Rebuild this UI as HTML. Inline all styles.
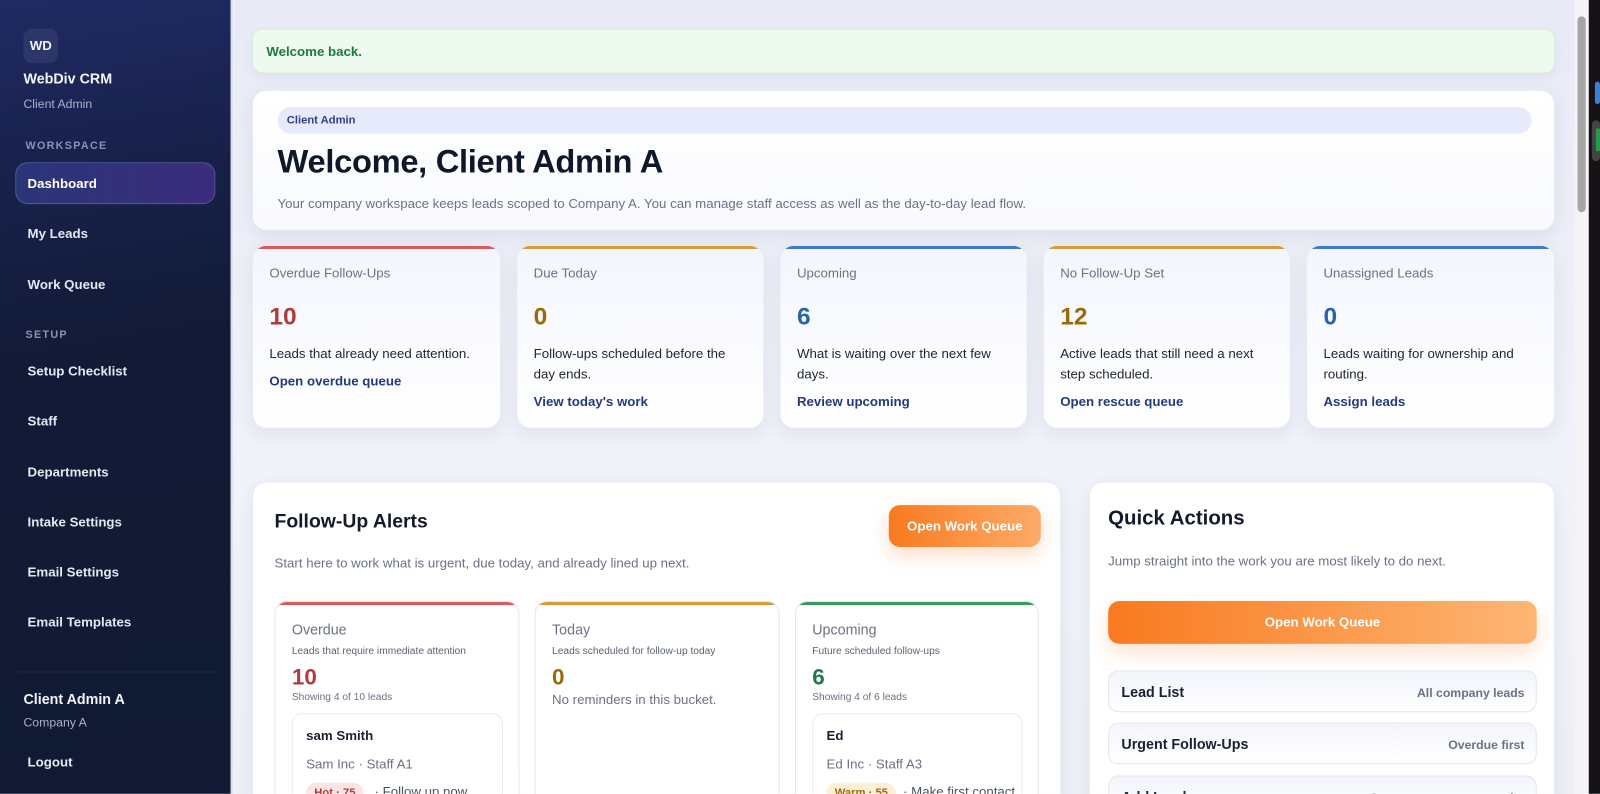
<!DOCTYPE html>
<html><head><meta charset="utf-8"><style>
*{box-sizing:border-box;margin:0;padding:0}
body{width:1600px;height:794px;overflow:hidden;font-family:"Liberation Sans",sans-serif;background:#eef0f8;position:relative}
#wrap{position:absolute;left:0;top:0;width:1568px;height:778px;transform:scale(1.020409);transform-origin:0 0;overflow:hidden}
.a{position:absolute}
#sb{left:0;top:0;width:228px;height:778px;background:linear-gradient(170deg,#1f2a63 0%,#18214a 22%,#121a36 45%,#111a32 100%);border-right:2px solid #d9dcea}
.nav{position:absolute;left:27px;font-size:13px;font-weight:bold;color:#e4e8f5}
.sec{position:absolute;left:25px;font-size:10.5px;font-weight:bold;letter-spacing:1.3px;color:#8b93b3}
#main{left:230px;top:0;width:1313px;height:778px;background:linear-gradient(180deg,#e8eaf6,#f1f3f9 60%,#eef0f6)}
.card{position:absolute;background:linear-gradient(180deg,#f4f6fd,#fff);border-radius:14px;box-shadow:0 6px 18px rgba(40,50,100,.08);border:1px solid #e8ebf4;overflow:hidden}
.stat .bar{position:absolute;left:0;top:0;right:0;height:3px}
.stat .t{position:absolute;left:16px;top:19px;font-size:13px;color:#6b7285}
.stat .n{position:absolute;left:16px;top:56px;font-size:24px;font-weight:bold}
.stat .d{position:absolute;left:16px;top:96px;width:222px;font-size:13px;line-height:20px;color:#1f2433}
.stat .l{font-size:13px;font-weight:bold;color:#243a80;display:block;margin-top:7px}
.sub{position:absolute;top:589px;height:220px;background:#fff;border:1px solid #e3e6ef;border-radius:12px;overflow:hidden}
.sub .bar{position:absolute;left:0;top:0;right:0;height:3px}
.sub .t{position:absolute;left:16px;top:19px;font-size:14px;color:#6b7285}
.sub .s{position:absolute;left:16px;top:43px;font-size:10px;color:#5b6275}
.sub .n{position:absolute;left:16px;top:61px;font-size:22px;font-weight:bold}
.sub .m{position:absolute;left:16px;top:88px;font-size:10px;color:#6b7285}
.lead{position:absolute;left:16px;top:109px;width:207px;height:120px;border:1px solid #e8ebf2;border-radius:10px;background:#fff}
.lead .nm{position:absolute;left:13px;top:13px;font-size:13px;font-weight:bold;color:#1a2033}
.lead .co{position:absolute;left:13px;top:41px;font-size:13px;color:#6b7285}
.lead .tg{position:absolute;left:13px;top:67px;font-size:11px;font-weight:bold;padding:4px 8px;border-radius:10px}
.lead .nx{position:absolute;top:68px;font-size:13px;color:#4b5263}
.qa{position:absolute;left:18px;width:420px;height:41px;border:1px solid #e3e6f0;border-radius:10px;background:linear-gradient(180deg,#f3f5fc,#fff)}
.qa b{position:absolute;left:12px;top:12px;font-size:14px;color:#1a2033}
.qa span{position:absolute;right:11px;top:14px;font-size:12px;font-weight:bold;color:#6b7285}
</style></head><body>
<div id="wrap">
<div id="sb" class="a">
 <div class="a" style="left:23px;top:28px;width:34px;height:34px;border-radius:9px;background:#2c3668;color:#f0f2fa;font-size:13px;font-weight:bold;text-align:center;line-height:34px">WD</div>
 <div class="a" style="left:23px;top:69px;font-size:14px;font-weight:bold;color:#f3f5fb">WebDiv CRM</div>
 <div class="a" style="left:23px;top:95px;font-size:12px;color:#a9b0cc">Client Admin</div>
 <div class="sec" style="top:137px">WORKSPACE</div>
 <div class="a" style="left:15px;top:159px;width:196px;height:41px;border-radius:12px;background:linear-gradient(90deg,#2b3577,#3a2c7c);border:1px solid #4c5699"></div>
 <div class="nav" style="top:172px;color:#fff">Dashboard</div>
 <div class="nav" style="top:221px">My Leads</div>
 <div class="nav" style="top:271px">Work Queue</div>
 <div class="sec" style="top:322px">SETUP</div>
 <div class="nav" style="top:356px">Setup Checklist</div>
 <div class="nav" style="top:405px">Staff</div>
 <div class="nav" style="top:455px">Departments</div>
 <div class="nav" style="top:504px">Intake Settings</div>
 <div class="nav" style="top:553px">Email Settings</div>
 <div class="nav" style="top:602px">Email Templates</div>
 <div class="a" style="left:16px;top:658px;width:196px;height:1px;background:#1e2844"></div>
 <div class="a" style="left:23px;top:677px;font-size:14px;font-weight:bold;color:#f3f5fb">Client Admin A</div>
 <div class="a" style="left:23px;top:701px;font-size:12px;color:#a9b0cc">Company A</div>
 <div class="nav" style="top:739px">Logout</div>
</div>
<div id="main" class="a"></div>
<div class="a" style="left:247px;top:28px;width:1277px;height:44px;border-radius:10px;background:#eef9f0;border:1px solid #d5edda;box-shadow:0 4px 12px rgba(40,50,100,.05)">
 <div class="a" style="left:13px;top:14px;font-size:13px;font-weight:bold;color:#1f7a3a">Welcome back.</div>
</div>
<div class="card" style="left:247px;top:88px;width:1277px;height:138px;background:linear-gradient(180deg,#fff,#f9fafd)">
 <div class="a" style="left:24px;top:16px;width:1229px;height:26px;border-radius:13px;background:#e6eafb"></div>
 <div class="a" style="left:33px;top:23px;font-size:11px;font-weight:bold;color:#2f3f8c">Client Admin</div>
 <div class="a" style="left:24px;top:51px;font-size:32px;font-weight:bold;color:#0f172a;letter-spacing:-.3px">Welcome, Client Admin A</div>
 <div class="a" style="left:24px;top:103px;font-size:13px;color:#6b7285">Your company workspace keeps leads scoped to Company A. You can manage staff access as well as the day-to-day lead flow.</div>
</div>
<div class="card stat" style="left:247px;top:240px;width:244px;height:180px"><div class="bar" style="background:#d9595a"></div><div class="t">Overdue Follow-Ups</div><div class="n" style="color:#b23b3b">10</div><div class="d">Leads that already need attention.<span class="l">Open overdue queue</span></div></div>
<div class="card stat" style="left:506px;top:240px;width:243px;height:180px"><div class="bar" style="background:#d99a34"></div><div class="t">Due Today</div><div class="n" style="color:#9a6a08">0</div><div class="d" style="width:210px">Follow-ups scheduled before the day ends.<span class="l">View today's work</span></div></div>
<div class="card stat" style="left:764px;top:240px;width:243px;height:180px"><div class="bar" style="background:#3c7bc7"></div><div class="t">Upcoming</div><div class="n" style="color:#2864a8">6</div><div class="d" style="width:210px">What is waiting over the next few days.<span class="l">Review upcoming</span></div></div>
<div class="card stat" style="left:1022px;top:240px;width:243px;height:180px"><div class="bar" style="background:#d99a34"></div><div class="t">No Follow-Up Set</div><div class="n" style="color:#9a6a08">12</div><div class="d" style="width:210px">Active leads that still need a next step scheduled.<span class="l">Open rescue queue</span></div></div>
<div class="card stat" style="left:1280px;top:240px;width:244px;height:180px"><div class="bar" style="background:#3c7bc7"></div><div class="t">Unassigned Leads</div><div class="n" style="color:#2864a8">0</div><div class="d" style="width:210px">Leads waiting for ownership and routing.<span class="l">Assign leads</span></div></div>

<div class="card" style="left:247px;top:472px;width:793px;height:340px;background:#fff">
 <div class="a" style="left:21px;top:28px;font-size:19px;font-weight:bold;color:#141a2b">Follow-Up Alerts</div>
 <div class="a" style="left:21px;top:71px;font-size:13px;color:#6b7285">Start here to work what is urgent, due today, and already lined up next.</div>
 <div class="a" style="left:623px;top:22px;width:149px;height:41px;border-radius:11px;background:linear-gradient(90deg,#f97a1f,#fdab68);box-shadow:0 8px 18px rgba(249,122,31,.25);color:#fff;font-size:13px;font-weight:bold;text-align:center;line-height:41px">Open Work Queue</div>
</div>
<div class="sub" style="left:269px;width:240px"><div class="bar" style="background:#d9595a"></div><div class="t">Overdue</div><div class="s">Leads that require immediate attention</div><div class="n" style="color:#b23b3b">10</div><div class="m">Showing 4 of 10 leads</div>
 <div class="lead"><div class="nm">sam Smith</div><div class="co">Sam Inc · Staff A1</div><div class="tg" style="background:#fde4e4;color:#b23b3b">Hot · 75</div><div class="nx" style="left:80px">· Follow up now</div></div></div>
<div class="sub" style="left:524px;width:240px"><div class="bar" style="background:#d99a34"></div><div class="t">Today</div><div class="s">Leads scheduled for follow-up today</div><div class="n" style="color:#9a6a08">0</div><div class="a" style="left:16px;top:88px;font-size:13px;color:#6b7285">No reminders in this bucket.</div></div>
<div class="sub" style="left:779px;width:239px"><div class="bar" style="background:#3a9a5e"></div><div class="t">Upcoming</div><div class="s">Future scheduled follow-ups</div><div class="n" style="color:#23784a">6</div><div class="m">Showing 4 of 6 leads</div>
 <div class="lead" style="width:206px"><div class="nm">Ed</div><div class="co">Ed Inc · Staff A3</div><div class="tg" style="background:#fdf0d6;color:#9a6a08">Warm · 55</div><div class="nx" style="left:88px">· Make first contact</div></div></div>

<div class="card" style="left:1067px;top:472px;width:457px;height:340px;background:#fff">
 <div class="a" style="left:18px;top:24px;font-size:20px;font-weight:bold;color:#141a2b">Quick Actions</div>
 <div class="a" style="left:18px;top:69px;font-size:13px;color:#6b7285">Jump straight into the work you are most likely to do next.</div>
 <div class="a" style="left:18px;top:116px;width:420px;height:42px;border-radius:11px;background:linear-gradient(90deg,#f97a1f,#fdb675);box-shadow:0 10px 20px rgba(249,122,31,.2);color:#fff;font-size:13px;font-weight:bold;text-align:center;line-height:42px">Open Work Queue</div>
 <div class="qa" style="top:184px"><b>Lead List</b><span>All company leads</span></div>
 <div class="qa" style="top:235px"><b>Urgent Follow-Ups</b><span>Overdue first</span></div>
 <div class="qa" style="top:287px"><b>Add Lead</b><span>Capture a new opportunity</span></div>
</div>

<div class="a" style="left:1543px;top:0;width:14px;height:778px;background:#f4f4f6"></div>
<div class="a" style="left:1546px;top:16px;width:8px;height:192px;border-radius:4px;background:#a5a5a8"></div>
<div class="a" style="left:1557px;top:0;width:11px;height:778px;background:#151114"></div>
<div class="a" style="left:1563px;top:80px;width:5px;height:22px;border-radius:3px;background:#3a7fd0"></div>
<div class="a" style="left:1560px;top:118px;width:8px;height:40px;border-radius:4px;background:#444"></div>
<div class="a" style="left:1564px;top:126px;width:4px;height:22px;background:#2a9a48"></div>
</div>
</body></html>
